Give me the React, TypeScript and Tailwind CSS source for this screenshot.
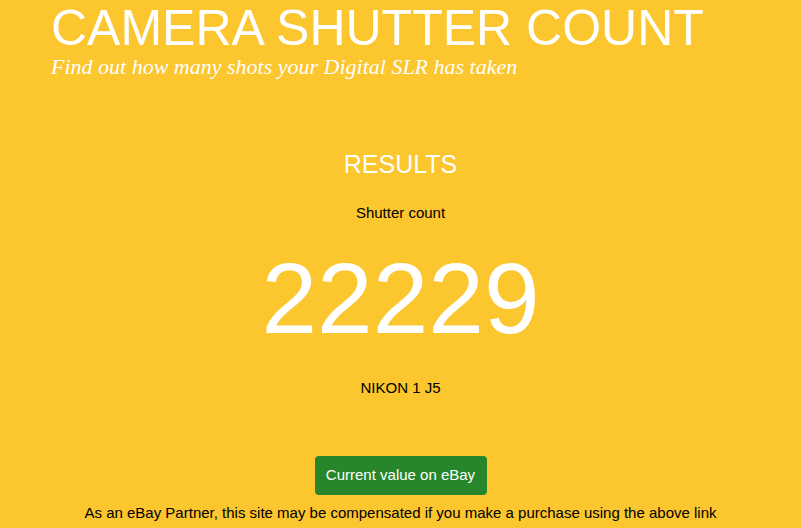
export default function App() {
  return (
    <div className="min-h-[528px] w-full bg-[#fbc62e] font-['Liberation_Sans',Arial,sans-serif] text-black">
      <header className="pl-[51px] pt-[1px]">
        <h1 className="text-[50px] leading-[54px] text-white">CAMERA SHUTTER COUNT</h1>
        <p className="font-['Liberation_Serif',Georgia,serif] text-[22px] italic leading-[24px] text-white">
          Find out how many shots your Digital SLR has taken
        </p>
      </header>
      <main className="flex flex-col items-center pt-[70px]">
        <h2 className="text-[25px] leading-[30px] text-white">RESULTS</h2>
        <p className="mt-[25px] text-[15px] leading-[18px]">Shutter count</p>
        <div className="mt-[19px] text-[100px] leading-[115px] text-white">22229</div>
        <p className="mt-[23px] text-[15px] leading-[18px]">NIKON 1 J5</p>
        <a
          href="#"
          className="mt-[59px] flex h-[39px] w-[172px] items-center justify-center rounded-[4px] bg-[#27862b] text-[15px] text-white"
        >
          Current value on eBay
        </a>
        <p className="mt-[8px] text-[15px] leading-[20px]">
          As an eBay Partner, this site may be compensated if you make a purchase using the above link
        </p>
      </main>
    </div>
  );
}
